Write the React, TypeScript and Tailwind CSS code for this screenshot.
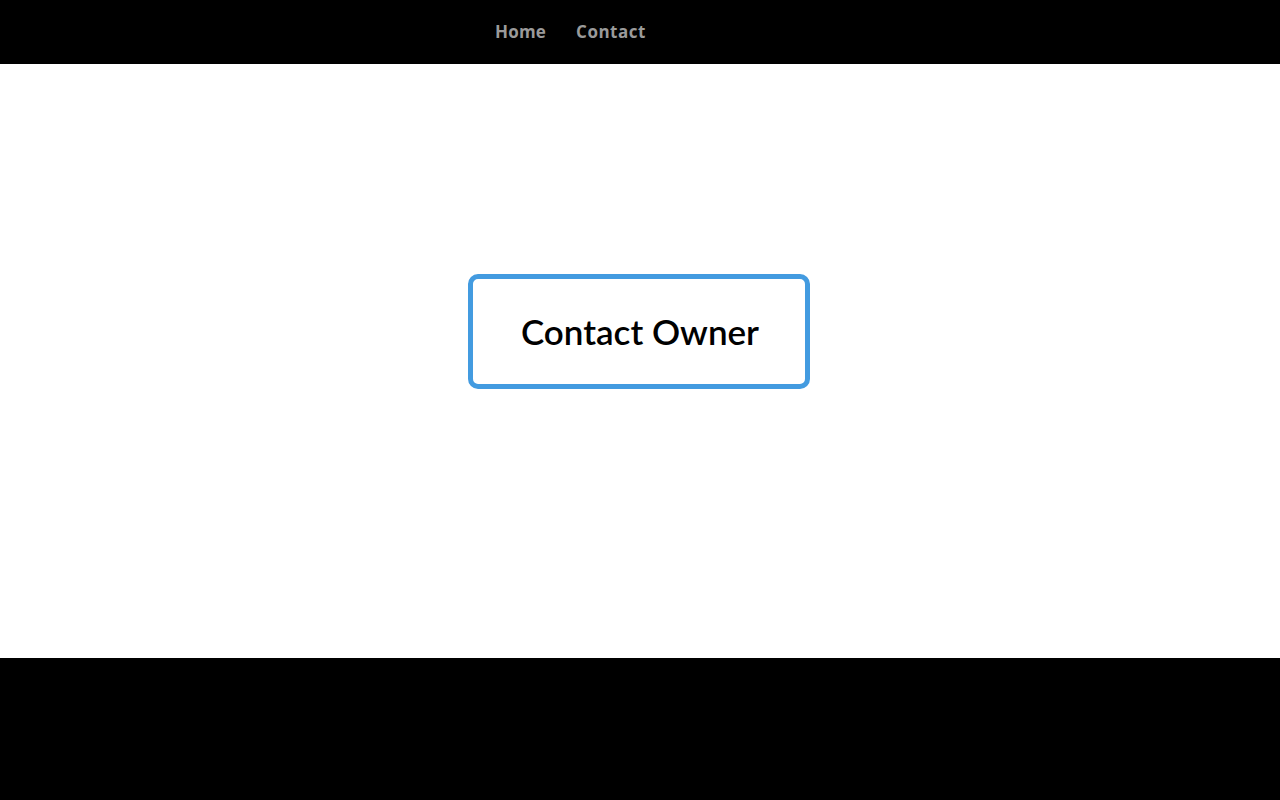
import React from "react";

export default function App() {
  return (
    <div className="flex min-h-screen flex-col bg-white">
      <nav className="flex h-16 items-center bg-black pl-[495px]">
        <a className="text-[17px] font-bold tracking-[0.2px] text-[#9a9a9a] [font-family:'Open_Sans',sans-serif]">Home</a>
        <a className="ml-[30px] text-[17px] font-bold tracking-[0.5px] text-[#9a9a9a] [font-family:'Open_Sans',sans-serif]">Contact</a>
      </nav>
      <main className="flex h-[594px] justify-center pt-[210px]">
        <button className="mr-[2px] flex h-[115px] w-[342px] items-center justify-center rounded-[10px] border-[5px] border-[#439be0] bg-white pl-[2px]">
          <span className="text-[35px] font-semibold text-black [font-family:Lato,sans-serif]">Contact Owner</span>
        </button>
      </main>
      <footer className="h-[142px] bg-black" />
    </div>
  );
}
